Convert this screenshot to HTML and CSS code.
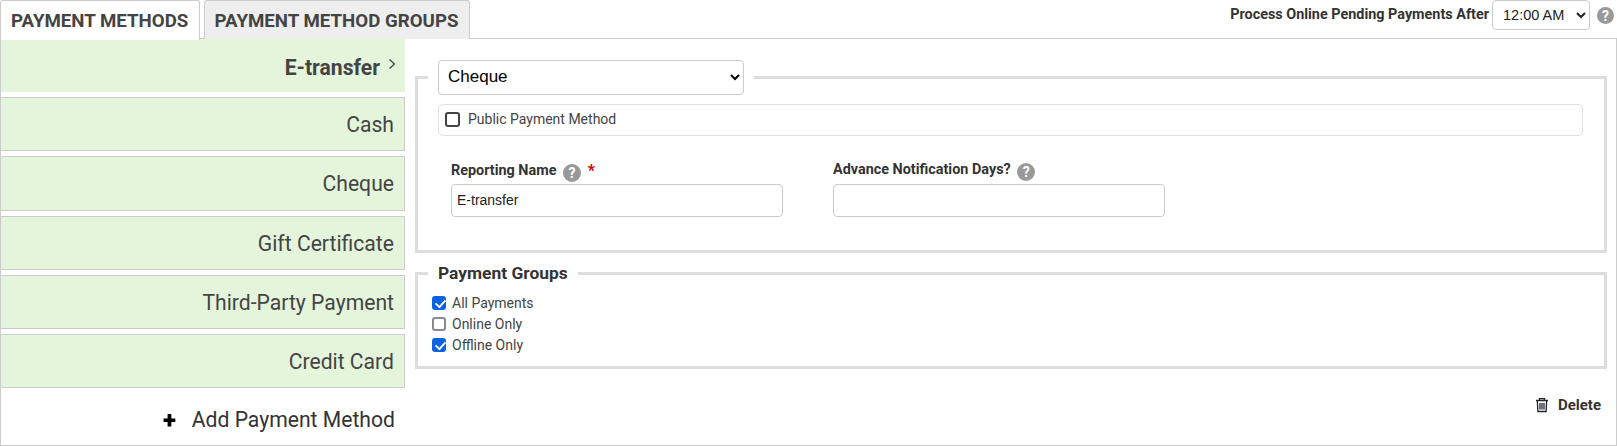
FILE: index.html
```html
<!DOCTYPE html>
<html lang="en">
<head>
<meta charset="utf-8">
<title>Payment Methods</title>
<link rel="stylesheet" href="styles.css">
</head>
<body>
<div class="topbar">
  <div class="tabs">
    <div class="tab active">PAYMENT METHODS</div>
    <div class="tab">PAYMENT METHOD GROUPS</div>
  </div>
  <div class="process">
    <span class="process-label">Process Online Pending Payments After</span>
    <select class="time"><option>12:00 AM</option></select>
    <span class="help">?</span>
  </div>
</div>
<div class="panel">
  <aside class="sidebar">
    <div class="method selected"><span>E-transfer</span><svg class="chev" width="9" height="12" viewBox="0 0 9 12"><path d="M1.5 1.5 6.5 6 1.5 10.5" fill="none" stroke="#444" stroke-width="1.3"/></svg></div>
    <div class="method">Cash</div>
    <div class="method">Cheque</div>
    <div class="method">Gift Certificate</div>
    <div class="method">Third-Party Payment</div>
    <div class="method">Credit Card</div>
    <div class="add"><span class="plus">+</span><span>Add Payment Method</span></div>
  </aside>
  <main class="content">
    <fieldset class="box details">
      <legend class="select-legend"><select class="type"><option>Cheque</option></select></legend>
      <label class="public"><input type="checkbox" class="check public-check"><span>Public Payment Method</span></label>
      <div class="fields">
        <div class="field">
          <div class="field-label">Reporting Name <span class="help">?</span> <span class="req">*</span></div>
          <input class="text" type="text" value="E-transfer">
        </div>
        <div class="field">
          <div class="field-label">Advance Notification Days? <span class="help">?</span></div>
          <input class="text" type="text">
        </div>
      </div>
    </fieldset>
    <fieldset class="box groups">
      <legend class="text-legend">Payment Groups</legend>
      <label class="group"><input type="checkbox" class="check" checked><span>All Payments</span></label>
      <label class="group"><input type="checkbox" class="check"><span>Online Only</span></label>
      <label class="group"><input type="checkbox" class="check" checked><span>Offline Only</span></label>
    </fieldset>
    <div class="actions">
      <span class="delete">
        <svg width="14" height="16" viewBox="0 0 14 16" fill="none" stroke="#1f2430" stroke-width="1.3"><path d="M1 3.500h12M4.500 3.500V1.600h5v1.900M2.300 3.500l.6 11h8.200l.6-11"/><path d="M5 6v6.500M7 6v6.500M9 6v6.500"/></svg>
        <span>Delete</span>
      </span>
    </div>
  </main>
</div>
</body>
</html>
```
FILE: styles.css
```css
* { box-sizing: border-box; }
html, body { margin: 0; padding: 0; background: #fff; }
body { width: 1617px; height: 446px; font-family: Roboto, "Liberation Sans", sans-serif; color: #444; overflow: hidden; }

.topbar { display: flex; justify-content: space-between; height: 39px; }
.tabs { display: flex; gap: 3.5px; align-items: flex-start; }
.tab { height: 39px; padding: 0 10px; font-size: 18.7px; font-weight: 700; line-height: 41px; color: #444; background: #eee; border: 1px solid #ccc; border-bottom: 0; border-radius: 3px 3px 0 0; position: relative; z-index: 1; white-space: nowrap; width: 266px; }
.tab.active { background: #fff; width: 200px; height: 40px; }

.process { display: flex; align-items: flex-start; padding-right: 3px; }
.process-label { font-size: 14.4px; font-weight: 700; color: #333; line-height: 30px; margin-right: 3px; }
.time { width: 98px; height: 30px; font: 14.5px "Liberation Sans", sans-serif; color: #222; background: #fff; border: 1px solid #ccc; border-radius: 4px; padding: 0 0 0 6px; }
.process .help { margin: 7px 0 0 7px; width: 17px; height: 17px; }

.help { display: inline-flex; align-items: center; justify-content: center; width: 18px; height: 18px; border-radius: 50%; background: #999; color: #fff; font-size: 14px; font-weight: 700; vertical-align: -3px; line-height: 1; }

.panel { display: flex; height: 408px; border: 1px solid #ccc; margin-top: -1px; }

.sidebar { width: 404px; flex: none; display: flex; flex-direction: column; }
.method { height: 54.25px; margin-bottom: 5px; flex: none; display: flex; justify-content: flex-end; align-items: center; padding-right: 10px; background: #e5f5dc; border: 1px solid #ccc; border-left: 0; font-size: 21.15px; color: #444; padding-top: 1px; }
.method.selected { height: 53px; margin-bottom: 5px; border: 0; font-weight: 700; padding-right: 8px; }
.method.selected span { margin-top: 2px; }
.chev { margin: -5px 0 0 8px; }
.add { display: flex; justify-content: flex-end; align-items: center; gap: 16px; padding: 14px 10px 0 0; font-size: 21.15px; color: #333; }
.plus { color: #000; font-size: 24px; font-weight: 900; line-height: 1; }

.content { flex: 1; min-width: 0; padding: 0 9px 0 10px; }
.box { margin: 0; border: 3px solid #ddd; min-width: 0; }
.details { height: 193px; margin-top: 21px; padding: 0 20px; }
.select-legend { padding: 0 10px; margin-left: -10px; line-height: 0; }
.type { width: 306px; height: 35px; font: 17px "Liberation Sans", sans-serif; color: #000; background: #fff; border: 1px solid #ccc; border-radius: 4px; padding: 0 5px 2px; }
.public { display: flex; align-items: center; gap: 8px; height: 32px; margin-top: 9px; padding: 0 0 2px 6px; border: 1px solid #e3e3e3; border-radius: 5px; font-size: 14px; color: #444; margin-right: 1px; }
.fields { display: flex; gap: 50px; margin-top: 25px; padding-left: 13px; }
.field { width: 332px; }
.field-label { font-size: 14.4px; font-weight: 700; color: #333; height: 23px; line-height: 18px; }
.field-label .help { margin: 0 3px; }
.req { color: #d40000; font-size: 16px; position: relative; top: 1px; }
.text { display: block; width: 100%; height: 33px; padding: 0 5px 2px; font: 14px "Liberation Sans", sans-serif; color: #222; border: 1px solid #ccc; border-radius: 4px; background: #fff; }

.groups { height: 105px; margin-top: 11px; padding: 9px 15px 0 14px; }
.text-legend { font-size: 17.4px; font-weight: 700; color: #333; padding: 0 10px; margin-left: -4px; line-height: 19px; }
.group { display: flex; align-items: center; gap: 6px; height: 21px; font-size: 14px; color: #444; }

.check { appearance: none; flex: none; position: relative; width: 14px; height: 14px; margin: 0; background: #fff; border: 2px solid #8a8a96; border-radius: 3px; }
.check:checked { background: #0b62e0; border-color: #0b62e0; }
.check:checked::after { content: ""; position: absolute; left: 2.5px; top: -0.5px; width: 5px; height: 9px; border: solid #fff; border-width: 0 2px 2px 0; transform: rotate(42deg) scale(.9); }
.public-check { width: 15px; height: 15px; border-color: #444; }

.actions { display: flex; justify-content: flex-end; padding: 27px 6px 0 0; }
.delete { display: flex; align-items: center; gap: 9px; font: 700 15px Roboto, sans-serif; color: #333; }
```
